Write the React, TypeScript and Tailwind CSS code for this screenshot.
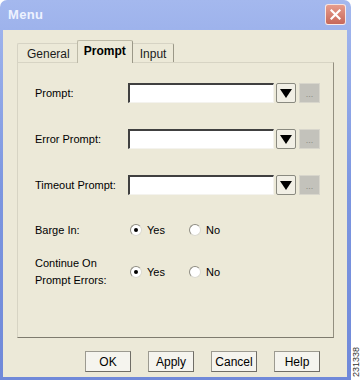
import React from 'react';

const font = { fontFamily: '"Liberation Sans", Arial, sans-serif' };

function ComboRow({ label }: { label: string }) {
  return (
    <div className="flex items-center h-[20px]">
      <div className="w-[93px] text-[11px] text-black">{label}</div>
      <div className="w-[146px] h-[20px] bg-white border-t-2 border-l-2 border-t-[#404040] border-l-[#404040] border-b border-r border-b-[#f4f3ee] border-r-[#f4f3ee]" />
      <button className="ml-[2px] w-[20px] h-[20px] flex items-center justify-center bg-[#f1efe5] border border-[#8a8a80] rounded-[2px]">
        <svg width="12" height="9" viewBox="0 0 12 9">
          <path d="M0 0 H12 L6 9 Z" fill="#000" />
        </svg>
      </button>
      <button className="ml-[3px] w-[21px] h-[20px] flex items-end justify-center pb-[3px] bg-[#c3c2bb] border border-[#d8d6cc] text-[9px] leading-none text-[#8a8a82]">
        ...
      </button>
    </div>
  );
}

function Radio({ checked, label }: { checked?: boolean; label: string }) {
  return (
    <div className="flex items-center gap-[5px] text-[11px]">
      <span className="w-[12px] h-[12px] rounded-full bg-white border border-[#dcdad0] border-t-[#8e8c82] border-l-[#8e8c82] flex items-center justify-center">
        {checked && <span className="w-[4px] h-[4px] rounded-full bg-black" />}
      </span>
      <span>{label}</span>
    </div>
  );
}

function DlgButton({ children }: { children: React.ReactNode }) {
  return (
    <button className="w-[46px] h-[21px] bg-[#f5f4ee] border border-[#9c9a90] border-r-[#6f6d66] border-b-[#6f6d66] text-[12px] text-black">
      {children}
    </button>
  );
}

export default function App() {
  return (
    <div className="w-[362px] h-[382px] bg-white flex" style={font}>
      <div className="w-[351px] h-[380px] flex flex-col rounded-t-[7px] bg-gradient-to-b from-[#a4b8ee] via-[#7c96e0] to-[#7089d9]">
        {/* Title bar */}
        <div className="h-[30px] flex items-center justify-between pl-[8px] pr-[5px] shrink-0">
          <span className="text-[13px] font-bold tracking-[0.3px] text-[#eef2ff]">Menu</span>
          <div className="w-[21px] h-[21px] rounded-[3px] border border-white/80 bg-gradient-to-b from-[#e79c8c] to-[#c6685a] flex items-center justify-center mb-[2px]">
            <svg width="11" height="11" viewBox="0 0 11 11">
              <path d="M1.5 1.5 L9.5 9.5 M9.5 1.5 L1.5 9.5" stroke="#fff" strokeWidth="2.2" strokeLinecap="square" />
            </svg>
          </div>
        </div>

        {/* Body */}
        <div className="flex-1 mx-[3px] mb-[3px] mr-[4px] bg-[#ece9d8] flex flex-col pt-[9px]">
          {/* Tabs */}
          <div className="flex items-end h-[23px] ml-[14px] text-[12px]">
            <div className="h-[19px] px-[9px] pt-[2px] flex items-center border-t border-l border-[#d6d3c4] rounded-tl-[2px] text-[#1b1b1b] -mr-[2px]">
              General
            </div>
            <div className="relative z-10 h-[23px] px-[6px] pb-[2px] flex items-center bg-[#ece9d8] border-t border-l border-r border-[#bdbaa8] border-r-[#9b9888] font-bold rounded-t-[2px] -mb-px">
              Prompt
            </div>
            <div className="h-[19px] px-[7px] pt-[2px] flex items-center border-t border-r border-[#d6d3c4] border-r-[#9b9888] rounded-tr-[2px] text-[#1b1b1b]">
              Input
            </div>
          </div>

          {/* Panel */}
          <div className="ml-[14px] w-[317px] h-[276px] border border-[#d7d4c4] border-r-[#938f80] border-b-[#7e7b6e] flex flex-col pl-[17px] pt-[20px]">
            <div className="flex flex-col gap-[26px]">
              <ComboRow label="Prompt:" />
              <ComboRow label="Error Prompt:" />
              <ComboRow label="Timeout Prompt:" />
            </div>
            <div className="flex items-center mt-[27px] text-[11px] h-[16px]">
              <div className="w-[95px]">Barge In:</div>
              <div className="w-[59px]">
                <Radio checked label="Yes" />
              </div>
              <Radio label="No" />
            </div>
            <div className="flex items-center mt-[17px] text-[11px]">
              <div className="w-[95px] leading-[17px]">
                Continue On
                <br />
                Prompt Errors:
              </div>
              <div className="w-[59px]">
                <Radio checked label="Yes" />
              </div>
              <Radio label="No" />
            </div>
          </div>

          {/* Buttons */}
          <div className="flex justify-end gap-[17px] mt-[13px] mr-[27px]">
            <DlgButton>OK</DlgButton>
            <DlgButton>Apply</DlgButton>
            <DlgButton>Cancel</DlgButton>
            <DlgButton>Help</DlgButton>
          </div>
        </div>
      </div>
      <div className="flex-1 flex items-end justify-center pb-[5px]">
        <span className="text-[9px] text-[#333] [writing-mode:vertical-rl] rotate-180 leading-none">231338</span>
      </div>
    </div>
  );
}
